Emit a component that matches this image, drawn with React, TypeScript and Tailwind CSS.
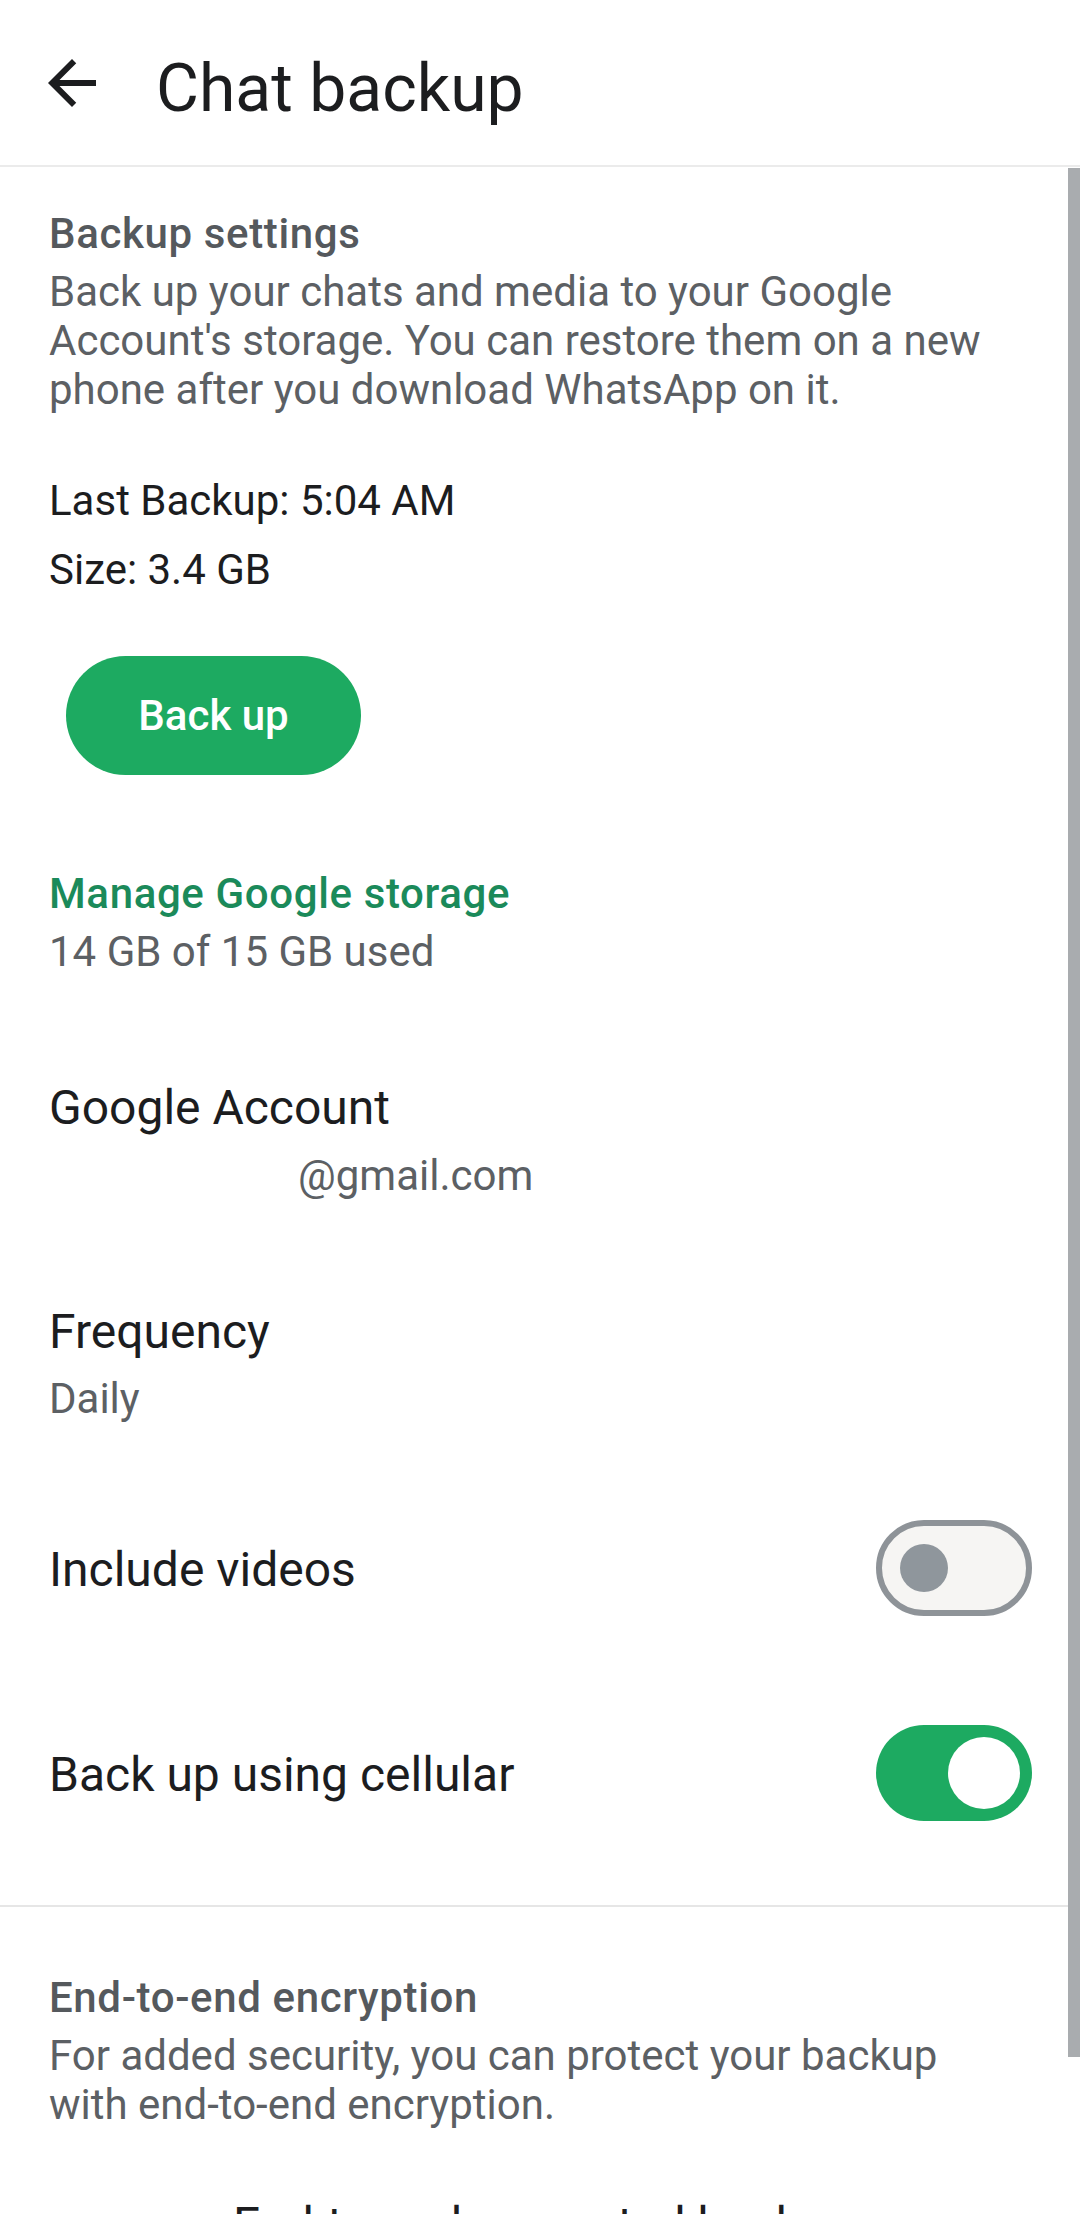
import { Lock } from "lucide-react";

function Toggle({ on }: { on: boolean }) {
  if (on) {
    return (
      <div className="flex h-[96px] w-[156px] shrink-0 items-center justify-end rounded-full bg-[#1daa61] pr-[12px]">
        <div className="h-[72px] w-[72px] rounded-full bg-white" />
      </div>
    );
  }
  return (
    <div className="flex h-[96px] w-[156px] shrink-0 items-center rounded-full border-[6px] border-[#8e9398] bg-[#f6f5f3] pl-[18px]">
      <div className="h-[48px] w-[48px] rounded-full bg-[#8f969c]" />
    </div>
  );
}

export default function App() {
  return (
    <div
      className="relative h-[2214px] w-[1080px] overflow-hidden bg-white text-[#1c1d1f]"
      style={{ fontFamily: "Roboto, 'Noto Sans', sans-serif" }}
    >
      {/* top bar */}
      <header className="flex h-[167px] items-center border-b-2 border-[#ebebeb]">
        <svg viewBox="0 0 24 24" className="ml-[36px] h-[72px] w-[72px] fill-[#1c1d1f]">
          <path d="M20 11H7.83l5.59-5.59L12 4l-8 8 8 8 1.41-1.41L7.83 13H20v-2z" />
        </svg>
        <h1 className="ml-[48px] pt-[11px] text-[66px] leading-[77px] font-normal">Chat backup</h1>
      </header>

      {/* scrollbar */}
      <div className="absolute top-[168px] right-0 h-[1889px] w-[12px] bg-[#a9acaf]" />

      <main>
        <section className="pr-[48px] pl-[49px]">
          <h2 className="mt-[42px] text-[42px] leading-[49px] font-medium tracking-[0.015em] text-[#55595d]">
            Backup settings
          </h2>
          <p className="mt-[9px] text-[42px] leading-[49px] text-[#5c6064]">
            Back up your chats and media to your Google Account's storage. You can restore them on a new phone after you
            download WhatsApp on it.
          </p>

          <div className="mt-[52px] text-[42px] leading-[69px]">
            <div>Last Backup: 5:04 AM</div>
            <div>Size: 3.4 GB</div>
          </div>

          <button className="mt-[52px] ml-[17px] flex h-[119px] w-[295px] items-center justify-center rounded-full bg-[#1daa61] text-[42px] font-medium text-white">
            Back up
          </button>

          <div className="mt-[94px] text-[42px] leading-[49px] font-medium tracking-[0.015em] text-[#1b8a5a]">
            Manage Google storage
          </div>
          <div className="mt-[9px] text-[42px] leading-[49px] text-[#5c6064]">14 GB of 15 GB used</div>

          <div className="mt-[104px] text-[48px] leading-[56px]">Google Account</div>
          <div className="mt-[15px] pl-[249px] text-[42px] leading-[49px] text-[#5c6064]">@gmail.com</div>

          <div className="mt-[104px] text-[48px] leading-[56px]">Frequency</div>
          <div className="mt-[14px] text-[42px] leading-[49px] text-[#5c6064]">Daily</div>

          <div className="mt-[97px] flex items-center justify-between">
            <span className="pt-[4px] text-[48px] leading-[56px]">Include videos</span>
            <Toggle on={false} />
          </div>

          <div className="mt-[109px] flex items-center justify-between">
            <span className="pt-[4px] text-[48px] leading-[56px]">Back up using cellular</span>
            <Toggle on={true} />
          </div>
        </section>

        <div className="mt-[84px] h-[2px] bg-[#e6e6e6]" />

        <section className="pr-[48px] pl-[49px]">
          <h2 className="mt-[66px] text-[42px] leading-[49px] font-medium tracking-[0.015em] text-[#55595d]">
            End-to-end encryption
          </h2>
          <p className="mt-[9px] w-[940px] text-[42px] leading-[49px] text-[#5c6064]">
            For added security, you can protect your backup with end-to-end encryption.
          </p>

          <div className="mt-[68px] flex">
            <div className="flex w-[184px] items-end pb-[10px]">
              <Lock className="h-[63px] w-[63px] text-[#5c6064]" />
            </div>
            <div>
              <div className="text-[48px] leading-[56px]">End-to-end encrypted backup</div>
              <div className="text-[42px] leading-[49px] text-[#5c6064]">Off</div>
            </div>
          </div>
        </section>
      </main>
    </div>
  );
}
